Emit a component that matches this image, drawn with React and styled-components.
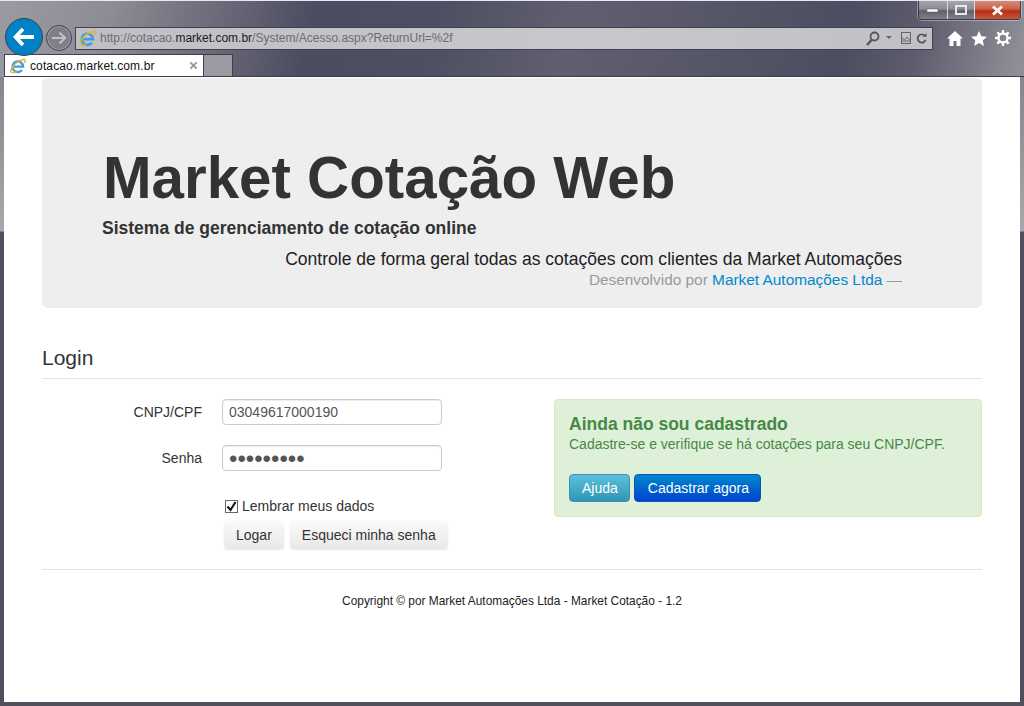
import React from "react";
import styled, { createGlobalStyle } from "styled-components";

const Global = createGlobalStyle`
  html, body { margin: 0; padding: 0; background: #55566a; }
  * { box-sizing: border-box; }
  body { font-family: "Liberation Sans", Arial, sans-serif; }
`;

const Window = styled.div`
  width: 1024px;
  height: 706px;
  display: flex;
  flex-direction: column;
  overflow: hidden;
  border-top: 1px solid #e8e8f0;
  background:
    linear-gradient(104deg, #9a9aa2 0px, #8c8c95 110px, #6a6a79 215px, #4c4c61 310px, #4f4f63 430px, #5f5f70 560px, #5a5a6c 640px, #4d4d61 830px, #5c5c6d 900px, #8d8d96 1000px, #92929a 1024px);
`;

const Chrome = styled.div`
  height: 76px;
  flex: none;
  display: flex;
  flex-direction: column;
  padding-left: 4px;
`;

const CaptionRow = styled.div`
  height: 19px;
  flex: none;
  display: flex;
  justify-content: flex-end;
  padding-right: 3px;
`;

const Caption = styled.div`
  display: flex;
  height: 19px;
  border: 1px solid #3a3a48;
  border-top: none;
  border-radius: 0 0 4px 4px;
  overflow: hidden;
  box-shadow: 0 0 0 1px rgba(255, 255, 255, 0.35);
`;

const CaptionButton = styled.div`
  width: ${(p) => p.$w}px;
  display: flex;
  align-items: center;
  justify-content: center;
  border-left: ${(p) => (p.$first ? "none" : "1px solid #d8d8de")};
  background: ${(p) =>
    p.$close
      ? "linear-gradient(#d98a78 0%, #c9604a 45%, #b52c12 55%, #c8573c 100%)"
      : "linear-gradient(#a5a5ae 0%, #8b8b96 45%, #5f5f6b 55%, #80808a 100%)"};
`;

const ToolRow = styled.div`
  height: 34px;
  flex: none;
  display: flex;
  align-items: center;
  padding-left: 1px;
`;

const BackButton = styled.div`
  width: 38px;
  height: 38px;
  flex: none;
  border-radius: 50%;
  background: #0083c6;
  border: 1px solid #3d4152;
  display: flex;
  align-items: center;
  justify-content: center;
  z-index: 1;
`;

const ForwardButton = styled.div`
  width: 26px;
  height: 26px;
  flex: none;
  margin: 2px 0 0 3px;
  border-radius: 50%;
  border: 1px solid #3f3f4e;
  background: #7f7f8a;
  box-shadow: inset 0 0 0 1px #a5a5ad;
  display: flex;
  align-items: center;
  justify-content: center;
`;

const AddressBar = styled.div`
  width: 858px;
  height: 23px;
  flex: none;
  margin: 2px 0 0 3px;
  display: flex;
  align-items: center;
  padding: 0 5px 0 3px;
  background: linear-gradient(90deg, #bfbfc5, #c7c7cc 60%, #c0c0c6);
  border: 1px solid #3f4050;
  font-size: 12px;
  color: #6c6c72;
  white-space: nowrap;
`;

const Url = styled.span`
  flex: 1;
  margin-left: 4px;
  b { font-weight: 400; color: #1a1a1e; }
`;

const AddressTools = styled.div`
  display: flex;
  align-items: center;
  gap: 5px;
`;

const ToolIcons = styled.div`
  display: flex;
  align-items: center;
  gap: 8px;
  margin: 2px 0 0 14px;
`;

const TabRow = styled.div`
  height: 23px;
  flex: none;
  display: flex;
  align-items: flex-end;
  border-bottom: 1px solid #3c3c4a;
`;

const Tab = styled.div`
  width: 200px;
  height: 22px;
  display: flex;
  align-items: center;
  padding: 0 5px;
  background: #fff;
  border: 1px solid #3f3f4e;
  border-bottom: none;
  font-size: 12px;
  letter-spacing: 0.01em;
  color: #111;
`;

const TabTitle = styled.span`
  flex: 1;
  margin-left: 4px;
`;

const NewTab = styled.div`
  width: 29px;
  height: 22px;
  background: #9a9aa2;
  border: 1px solid #3f3f4e;
  border-left: none;
  border-bottom: none;
`;

const Frame = styled.div`
  flex: 1;
  display: flex;
  padding: 0 4px 4px;
  min-height: 0;
  background: linear-gradient(#85858e 0, #a8a8ad 154px, #50505f 155px, #50505f 100%);
`;

const Page = styled.main`
  flex: 1;
  background: #fff;
  padding: 1px 38px 0;
  color: #333;
`;

const Jumbotron = styled.section`
  height: 230px;
  padding: 65px 80px 0 61px;
  background: #eee;
  border-radius: 6px;
`;

const Title = styled.h1`
  margin: 0;
  font-size: 58.3px;
  line-height: 69px;
  font-weight: 700;
  color: #333;
`;

const Lead = styled.p`
  margin: 3px 0 0 -1px;
  font-size: 17.5px;
  line-height: 26px;
  font-weight: 700;
  color: #333;
`;

const Quote = styled.blockquote`
  margin: 6px 0 0;
  text-align: right;
  font-size: 17.55px;
  line-height: 24px;
  color: #222;
`;

const Credit = styled.small`
  display: block;
  font-size: 15.4px;
  line-height: 18px;
  color: #999;
  a { color: #0088cc; text-decoration: none; }
`;

const Legend = styled.h2`
  margin: 26px 0 0;
  height: 45px;
  font-size: 21px;
  line-height: 48px;
  font-weight: 400;
  color: #333;
  border-bottom: 1px solid #e5e5e5;
`;

const FormArea = styled.div`
  display: flex;
  margin-top: 20px;
`;

const LoginForm = styled.form`
  width: 512px;
  flex: none;
  font-size: 14px;
`;

const FormRow = styled.div`
  display: flex;
  align-items: center;
  height: 26px;
  margin-bottom: 20px;
`;

const Label = styled.label`
  width: 160px;
  flex: none;
  text-align: right;
  color: #333;
`;

const Input = styled.input`
  width: 220px;
  height: 26px;
  margin-left: 20px;
  padding: ${(p) => (p.type === "password" ? "2px" : "0")} 6px 0;
  border: 1px solid #ccc;
  border-radius: 4px;
  box-shadow: inset 0 1px 1px rgba(0, 0, 0, 0.075);
  font: ${(p) => (p.type === "password" ? 24 : 14)}px "Liberation Sans", Arial, sans-serif;
  color: #555;
  outline: none;
`;

const Remember = styled.label`
  display: flex;
  align-items: center;
  margin: 25px 0 0 183px;
  height: 20px;
  gap: 4px;
`;

const Check = styled.span`
  width: 13px;
  height: 13px;
  border: 1px solid #666;
  background: #fff;
  display: flex;
  align-items: center;
  justify-content: center;
`;

const Buttons = styled.div`
  display: flex;
  gap: ${(p) => p.$gap}px;
  margin: ${(p) => p.$margin};
`;

const GreyButton = styled.button`
  height: 28px;
  padding: 0 12px;
  border: none;
  border-radius: 4px;
  background: linear-gradient(#fafafa, #e8e8e8);
  box-shadow: 0 1px 2px rgba(0, 0, 0, 0.1);
  font: 14px "Liberation Sans", Arial, sans-serif;
  color: #333;
`;

const ColorButton = styled.button`
  height: 28px;
  padding: 0 11px 0 ${(p) => p.$left}px;
  border: 1px solid ${(p) => p.$edge};
  border-radius: 4px;
  background: linear-gradient(${(p) => p.$from}, ${(p) => p.$to});
  font: 14px "Liberation Sans", Arial, sans-serif;
  color: #fff;
`;

const Notice = styled.aside`
  width: 428px;
  height: 118px;
  padding: 15px 14px 0;
  background: #dff0d8;
  border: 1px solid #d6e9c6;
  border-radius: 4px;
  color: #468847;
`;

const NoticeTitle = styled.h4`
  margin: 0;
  font-size: 17.5px;
  line-height: 19px;
  font-weight: 700;
`;

const NoticeText = styled.p`
  margin: 0;
  font-size: 14px;
  line-height: 20px;
`;

const Divider = styled.hr`
  margin: 20px 0 0;
  border: none;
  border-top: 1px solid #e5e5e5;
`;

const Footer = styled.footer`
  margin-top: 23px;
  text-align: center;
  font-size: 11.9px;
  line-height: 16px;
  color: #222;
`;

const IeLogo = ({ size }) => (
  <svg width={size} height={size} viewBox="0 0 18 18">
    <path d="M4.500 9.800H14.800A6 6 0 1 0 13.500 13.600" fill="none" stroke="#3a9fe0" strokeWidth="2.600" />
    <path d="M13.500 2.200C9 3 3 8 1 14C.5 17 3.500 17 7.500 15.500M13.500 2.200C16 .5 18 1.500 16.500 5.500" fill="none" stroke="#eeae2c" strokeWidth="1.600" />
  </svg>
);

const App = () => (
  <Window>
    <Global />
    <Chrome>
      <CaptionRow>
        <Caption>
          <CaptionButton $w={28} $first>
            <svg width="12" height="5" viewBox="0 0 12 5"><rect y="1" width="11" height="3" fill="#fff" stroke="#555" strokeWidth="0.5" /></svg>
          </CaptionButton>
          <CaptionButton $w={27}>
            <svg width="12" height="10" viewBox="0 0 12 10"><rect x="1" y="1" width="10" height="8" fill="none" stroke="#e8e8ec" strokeWidth="2" /></svg>
          </CaptionButton>
          <CaptionButton $w={46} $close>
            <svg width="13" height="11" viewBox="0 0 13 11"><path d="M2 1.500l9 8M11 1.500l-9 8" stroke="#fff" strokeWidth="2.800" /></svg>
          </CaptionButton>
        </Caption>
      </CaptionRow>
      <ToolRow>
        <BackButton>
          <svg width="22" height="20" viewBox="0 0 22 20"><path d="M10 2L2.500 10l7.500 8M3 10h18" fill="none" stroke="#fff" strokeWidth="3.800" /></svg>
        </BackButton>
        <ForwardButton>
          <svg width="16" height="14" viewBox="0 0 16 14"><path d="M8.500 1.500L14 7l-5.500 5.500M14 7H1" fill="none" stroke="#c0c0c6" strokeWidth="2.200" /></svg>
        </ForwardButton>
        <AddressBar>
          <IeLogo size={17} />
          <Url>http://cotacao.<b>market.com.br</b>/System/Acesso.aspx?ReturnUrl=%2f</Url>
          <AddressTools>
            <svg width="30" height="15" viewBox="0 0 30 15">
              <circle cx="8.500" cy="5.500" r="4" fill="none" stroke="#55555b" strokeWidth="1.800" />
              <path d="M5.500 9L1 14" stroke="#55555b" strokeWidth="2.400" />
              <path d="M20 5h6l-3 3z" fill="#66666c" />
            </svg>
            <svg width="10" height="12" viewBox="0 0 10 12">
              <rect x="0.500" y="0.500" width="9" height="11" fill="none" stroke="#66666c" />
              <path d="M1 6l2.500 2L6 5l3 3M1 9h8" fill="none" stroke="#66666c" />
            </svg>
            <svg width="11" height="13" viewBox="0 0 13 13">
              <path d="M10.500 3.500A4.800 4.800 0 1 0 11.300 8" fill="none" stroke="#55555b" strokeWidth="2.200" />
              <path d="M8 4.500h4.500V0z" fill="#55555b" />
            </svg>
          </AddressTools>
        </AddressBar>
        <ToolIcons>
          <svg width="16" height="15" viewBox="0 0 16 15"><path d="M8 0L0 7.500h2.500V15h4v-5h3v5h4V7.500H16z" fill="#fff" /></svg>
          <svg width="16" height="15" viewBox="0 0 16 15"><path d="M8 0l2.300 5.200 5.700.5-4.300 3.700 1.300 5.600L8 12l-5 3 1.300-5.600L0 5.700l5.700-.5z" fill="#fff" /></svg>
          <svg width="16" height="16" viewBox="0 0 16 16">
            <circle cx="8" cy="8" r="4.500" fill="none" stroke="#fff" strokeWidth="2.400" />
            <path d="M8 0v3M8 13v3M0 8h3M13 8h3M2.300 2.300l2.100 2.100M11.600 11.600l2.100 2.100M2.300 13.700l2.100-2.100M11.600 4.400l2.100-2.100" stroke="#fff" strokeWidth="2.400" />
          </svg>
        </ToolIcons>
      </ToolRow>
      <TabRow>
        <Tab>
          <IeLogo size={16} />
          <TabTitle>cotacao.market.com.br</TabTitle>
          <svg width="9" height="9" viewBox="0 0 10 10"><path d="M1.500 1.500l7 7M8.500 1.500l-7 7" stroke="#9b9b9b" strokeWidth="2.200" /></svg>
        </Tab>
        <NewTab />
      </TabRow>
    </Chrome>
    <Frame>
      <Page>
        <Jumbotron>
          <Title>Market Cotação Web</Title>
          <Lead>Sistema de gerenciamento de cotação online</Lead>
          <Quote>
            Controle de forma geral todas as cotações com clientes da Market Automações
            <Credit>Desenvolvido por <a href="#m">Market Automações Ltda</a> —</Credit>
          </Quote>
        </Jumbotron>
        <Legend>Login</Legend>
        <FormArea>
          <LoginForm>
            <FormRow>
              <Label>CNPJ/CPF</Label>
              <Input defaultValue="03049617000190" />
            </FormRow>
            <FormRow>
              <Label>Senha</Label>
              <Input type="password" defaultValue="123456789" />
            </FormRow>
            <Remember>
              <Check>
                <svg width="11" height="11" viewBox="0 0 11 11"><path d="M1.500 5.500l3 3.500 5-8" fill="none" stroke="#111" strokeWidth="2" /></svg>
              </Check>
              Lembrar meus dados
            </Remember>
            <Buttons $gap={6} $margin="5px 0 0 182px">
              <GreyButton type="button">Logar</GreyButton>
              <GreyButton type="button">Esqueci minha senha</GreyButton>
            </Buttons>
          </LoginForm>
          <Notice>
            <NoticeTitle>Ainda não sou cadastrado</NoticeTitle>
            <NoticeText>Cadastre-se e verifique se há cotações para seu CNPJ/CPF.</NoticeText>
            <Buttons $gap={4} $margin="20px 0 0">
              <ColorButton type="button" $left={12} $edge="#3a94ae" $from="#5bc0de" $to="#2f96b4">Ajuda</ColorButton>
              <ColorButton type="button" $left={13} $edge="#0a56b8" $from="#0088cc" $to="#0044cc">Cadastrar agora</ColorButton>
            </Buttons>
          </Notice>
        </FormArea>
        <Divider />
        <Footer>Copyright © por Market Automações Ltda - Market Cotação - 1.2</Footer>
      </Page>
    </Frame>
  </Window>
);

export default App;
